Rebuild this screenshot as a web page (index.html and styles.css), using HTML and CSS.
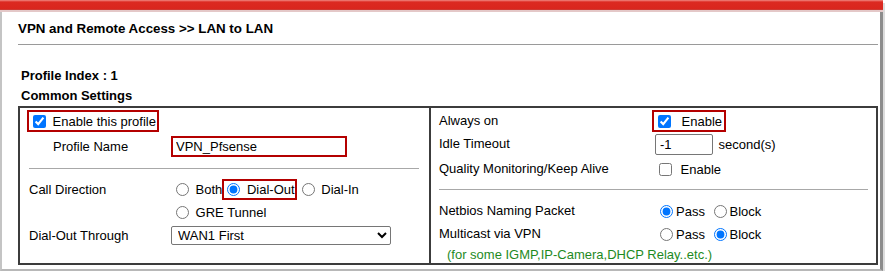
FILE: index.html
```html
<!DOCTYPE html>
<html lang="en">
<head>
<meta charset="UTF-8">
<title>LAN to LAN</title>
<link rel="stylesheet" href="styles.css">
</head>
<body>
<div class="frame">
    <div class="topbar"></div>

    <div class="content">
        <h1 class="title">VPN and Remote Access &gt;&gt; LAN to LAN</h1>

        <div class="heading heading-index">Profile Index : 1</div>
        <div class="heading heading-common">Common Settings</div>

        <div class="settings">
            <div class="cell cell-left">
                <div class="row row-a">
                    <label class="mark mark-profile"><input type="checkbox" checked> Enable this profile</label>
                </div>
                <div class="row row-b">
                    <span class="label-name">Profile Name</span>
                    <input type="text" class="name-input" value="VPN_Pfsense">
                </div>
                <hr class="sep sep-left">
                <div class="row row-c">
                    <span class="label">Call Direction</span>
                    <span class="value"><input type="radio" name="dir"> Both<label class="mark mark-dial"><input type="radio" name="dir" class="dial-radio" checked> Dial-Out</label><input type="radio" name="dir"> Dial-In</span>
                </div>
                <div class="row row-d">
                    <span class="label"></span>
                    <span class="value"><input type="radio" name="dir"> GRE Tunnel</span>
                </div>
                <div class="row row-e">
                    <span class="label">Dial-Out Through</span>
                    <select class="wan-select">
                        <option>WAN1 First</option>
                    </select>
                </div>
            </div>

            <div class="cell cell-right">
                <div class="row row-1">
                    <span class="label-r">Always on</span>
                    <label class="mark mark-always"><input type="checkbox" checked> Enable</label>
                </div>
                <div class="row row-2">
                    <span class="label-r">Idle Timeout</span>
                    <span class="value-r"><input type="text" class="idle-input" value="-1"> second(s)</span>
                </div>
                <div class="row row-3">
                    <span class="label-r">Quality Monitoring/Keep Alive</span>
                    <span class="value-r value-check"><input type="checkbox"> Enable</span>
                </div>
                <hr class="sep sep-right">
                <div class="row row-4">
                    <span class="label-r">Netbios Naming Packet</span>
                    <span class="value-r value-radio"><input type="radio" name="nb" class="first" checked>Pass <input type="radio" name="nb">Block</span>
                </div>
                <div class="row row-5">
                    <span class="label-r">Multicast via VPN</span>
                    <span class="value-r value-radio"><input type="radio" name="mc" class="first">Pass <input type="radio" name="mc" checked>Block</span>
                </div>
                <div class="note">(for some IGMP,IP-Camera,DHCP Relay..etc.)</div>
            </div>
        </div>
    </div>
</div>
</body>
</html>
```

FILE: styles.css
```css
body {
    margin: 0;
    background-color: #ffffff;
    font-family: "Liberation Sans", Arial, sans-serif;
    font-size: 13px;
    color: #000;
}

.frame {
    width: 878px;
    height: 269px;
    border-left: 2px solid #c4c4c4;
    border-right: 3px solid #8c8c8c;
    border-bottom: 2px solid #b8b8b8;
    box-shadow: 2px 3px 0 #dcdcdc;
    background-color: #fff;
}

.topbar {
    height: 10px;
    margin-left: -2px;
    margin-right: -3px;
    background: linear-gradient(#f08a84 0, #dc2a22 2px, #d9261e 9px, #c44a44 10px);
    border-bottom: 2px solid #e4c8c8;
}

.content {
    padding-left: 16px;
}

.title {
    margin: 0;
    height: 31px;
    padding-top: 1px;
    font-size: 13.33px;
    font-weight: bold;
    line-height: 32px;
    border-bottom: 1px solid #9a9a9a;
    width: 860px;
}

.heading {
    font-weight: bold;
    padding-left: 3px;
    line-height: 20px;
}

.heading-index {
    margin-top: 21px;
}

.settings {
    display: grid;
    grid-template-columns: 411px 1fr;
    width: 856px;
    height: 155px;
    border: 2px solid #3c3c3c;
}

.cell-left {
    border-right: 2px solid #3c3c3c;
}

.row {
    display: flex;
    align-items: center;
}

/* left cell */

.row-a {
    margin-top: 2px;
    height: 22px;
    padding-left: 7px;
}

.mark {
    display: inline-flex;
    align-items: center;
    border: 2px solid #b40000;
    white-space: pre;
}

.mark input {
    margin: 3px 3px 3px 4px;
}

.mark-profile {
    height: 18px;
    padding-right: 1px;
}

.row-b {
    margin-top: 2px;
    height: 25px;
    padding-left: 33px;
}

.label-name {
    width: 118px;
}

.name-input {
    box-sizing: border-box;
    width: 176px;
    height: 21px;
    border: 2px solid #b40000;
    padding: 0 3px;
    font-family: "Liberation Sans", Arial, sans-serif;
    font-size: 13px;
    outline: none;
}

.sep {
    border: none;
    border-top: 1px solid #a8a8a8;
    height: 0;
}

.sep-left {
    margin: 9px 10px 0 9px;
}

.row-c {
    margin-top: 9px;
    height: 22px;
    padding-left: 9px;
}

.label {
    width: 142px;
    flex: none;
}

.value {
    white-space: pre;
    display: inline-flex;
    align-items: center;
}

.value input {
    margin: 0 3px 0 5px;
}

.mark-dial {
    height: 17px;
    padding-right: 0;
}

.mark .dial-radio {
    margin: 0 3px 0 3px;
}

.row-d {
    height: 24px;
    padding-left: 9px;
}

.row-e {
    height: 22px;
    padding-left: 9px;
}

.wan-select {
    width: 220px;
    height: 19px;
    padding: 0 0 0 2px;
    border: 1px solid #767676;
    border-radius: 2px;
    background-color: #fff;
    font-family: "Liberation Sans", Arial, sans-serif;
    font-size: 13px;
}

/* right cell */

.cell-right .row {
    padding-left: 8px;
}

.label-r {
    width: 213px;
    flex: none;
    margin-bottom: 2px;
}

.row-1 {
    margin-top: 2px;
    height: 22px;
}

.mark-always {
    height: 18px;
    padding-right: 2px;
}

.mark-always input {
    margin: 3px 7px 3px 4px;
}

.row-2 {
    height: 24px;
}

.value-r {
    display: inline-flex;
    align-items: center;
    white-space: pre;
}

.idle-input {
    box-sizing: border-box;
    width: 58px;
    height: 21px;
    margin: 0 2px 0 3px;
    padding: 0 4px;
    border: 1px solid #767676;
    border-radius: 2px;
    font-family: "Liberation Sans", Arial, sans-serif;
    font-size: 13px;
}

.row-3 {
    height: 26px;
}

.value-check input {
    margin: 0 5px 0 7px;
}

.sep-right {
    margin: 7px 8px 0 8px;
}

.row-4 {
    margin-top: 10px;
    height: 23px;
}

.row-5 {
    height: 23px;
}

.value-radio input {
    margin: 0 3px 0 5px;
}

.value-radio input.first {
    margin-left: 8px;
}

.note {
    height: 18px;
    line-height: 18px;
    padding-left: 16px;
    color: #1e8a1e;
}
```
